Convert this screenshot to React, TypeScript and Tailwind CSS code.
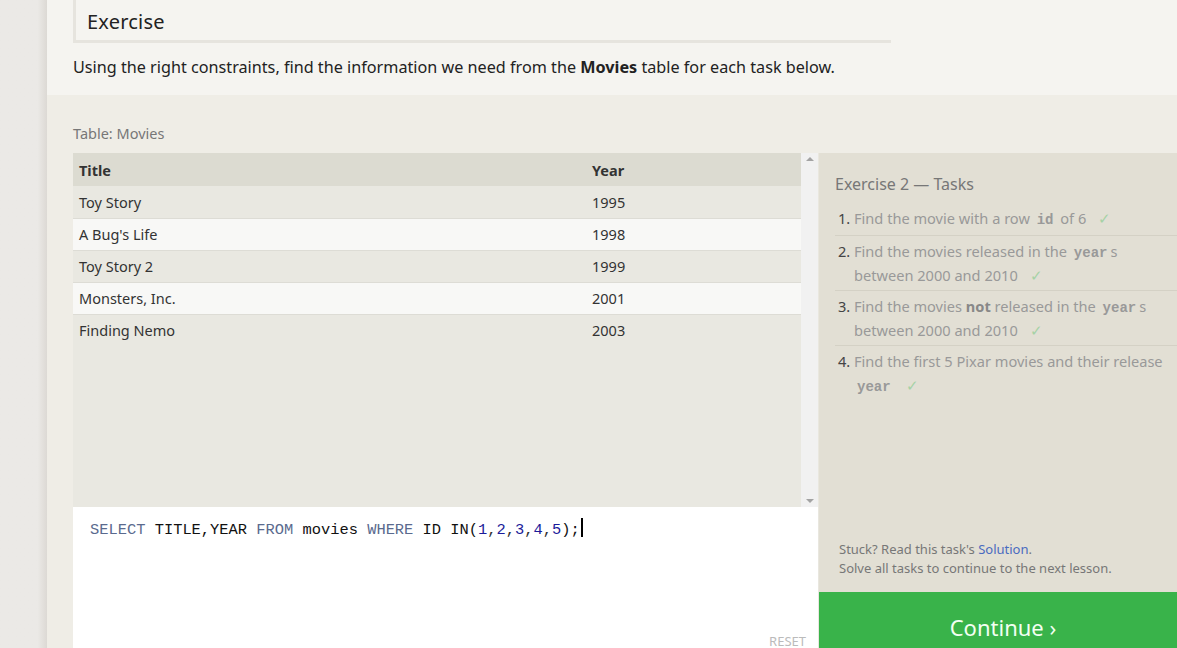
import React from 'react';

interface Movie {
  id: number;
  title: string;
  year: number;
}

const movies: Movie[] = [
  { id: 1, title: 'Toy Story', year: 1995 },
  { id: 2, title: "A Bug's Life", year: 1998 },
  { id: 3, title: 'Toy Story 2', year: 1999 },
  { id: 4, title: 'Monsters, Inc.', year: 2001 },
  { id: 5, title: 'Finding Nemo', year: 2003 }
];

const sans = { fontFamily: '"Noto Sans", "Open Sans", sans-serif' };
const mono = { fontFamily: '"Liberation Mono", monospace' };

function Code({ children }: { children: React.ReactNode }) {
  return (
    <code className="mx-[3px] text-[14px] font-bold leading-none text-[#999]" style={mono}>
      {children}
    </code>
  );
}

function Check() {
  return <span className="ml-[12px] text-[15px] leading-none text-[#a6d2a6]">✓</span>;
}

export default function App() {
  return (
    <div className="flex h-[648px] w-[1177px] overflow-hidden bg-[#ebe9e6] text-[#333]" style={sans}>
      {/* left gutter with shadow */}
      <div className="w-[47px] shrink-0 bg-gradient-to-r from-[#ebe9e6] from-80% to-[#dcd9d4]" />

      <div className="flex min-w-0 flex-1 flex-col">
        {/* intro */}
        <div className="h-[95px] shrink-0 bg-[#f5f4f0] pl-[26px]">
          <div className="w-[818px] border-b-[3px] border-l-[3px] border-[#e6e4de] pb-[4px] pl-[11px] pt-[8px]">
            <h2 className="text-[20px] leading-[28px] tracking-[0.2px] text-[#222]">Exercise</h2>
          </div>
          <p className="mt-[13px] text-[16.2px] leading-[22px] text-[#222]">
            Using the right constraints, find the information we need from the <b>Movies</b> table for each task below.
          </p>
        </div>

        {/* exercise body */}
        <div className="flex flex-1 flex-col bg-[#efede6] pl-[26px]">
          <div className="pb-[10px] pt-[28px] text-[14.5px] leading-[20px] text-[#777]">Table: Movies</div>

          <div className="flex flex-1">
            <div className="flex w-[745px] shrink-0 flex-col">
              {/* table + scrollbar */}
              <div className="flex h-[354px] shrink-0">
                <div className="flex-1 bg-[#e9e8e1]">
                  <table className="w-full border-collapse text-left text-[14.5px] text-[#333]">
                    <thead>
                      <tr className="h-[33px] bg-[#dcdbd1]">
                        <th className="w-[519px] pl-[6px] pt-[2px] font-bold">Title</th>
                        <th className="pt-[2px] font-bold">Year</th>
                      </tr>
                    </thead>
                    <tbody>
                      {movies.map((m, i) => (
                        <tr
                          key={m.id}
                          className={`h-[32px] ${i % 2 === 1 ? 'bg-[#f8f8f6]' : 'bg-[#e9e8e1]'} ${i === movies.length - 1 ? '' : 'border-b border-[#dddcd5]'}`}
                        >
                          <td className="pl-[6px] pt-[2px]">{m.title}</td>
                          <td className="pt-[2px]">{m.year}</td>
                        </tr>
                      ))}
                    </tbody>
                  </table>
                </div>
                <div className="flex w-[17px] flex-col items-center justify-between bg-[#f1f1f1] py-[4px]">
                  <span className="h-0 w-0 border-x-[4px] border-b-[4px] border-x-transparent border-b-[#a3a3a3]" />
                  <span className="h-0 w-0 border-x-[4px] border-t-[4px] border-x-transparent border-t-[#a3a3a3]" />
                </div>
              </div>

              {/* editor */}
              <div className="relative flex-1 bg-white pl-[17px] pt-[8px]">
                <div className="text-[15.4px] leading-[20px]" style={mono}>
                  <span className="text-[#5a6a8e]">SELECT</span>{' '}
                  <span className="text-[#111]">TITLE,YEAR</span>{' '}
                  <span className="text-[#5a6a8e]">FROM</span>{' '}
                  <span className="text-[#111]">movies</span>{' '}
                  <span className="text-[#5a6a8e]">WHERE</span>{' '}
                  <span className="text-[#111]">ID IN(</span>
                  <span className="text-[#1b1b9a]">1</span>,<span className="text-[#1b1b9a]">2</span>,
                  <span className="text-[#1b1b9a]">3</span>,<span className="text-[#1b1b9a]">4</span>,
                  <span className="text-[#1b1b9a]">5</span>
                  <span className="text-[#111]">);</span>
                  <span className="ml-[1px] inline-block h-[19px] w-[2px] translate-y-[3px] bg-black" />
                </div>
                <div className="absolute bottom-[-3px] right-[12px] text-[13px] uppercase text-[#bbb]">Reset</div>
              </div>
            </div>

            {/* tasks panel */}
            <div className="flex flex-1 flex-col border-l border-[#e9e7df]">
              <div className="flex flex-1 flex-col bg-[#e2dfd4] pl-[16px]">
                <div className="pt-[20px] text-[16px] leading-[22px] text-[#777]">Exercise 2 — Tasks</div>
                <ol className="mt-[11px] text-[14.6px] leading-[24px] text-[#999]">
                  <li className="flex pb-[5px]">
                    <span className="w-[19px] shrink-0 pl-[3px] text-[#444]">1.</span>
                    <span className="flex-1">
                      Find the movie with a row <Code>id</Code> of 6<Check />
                    </span>
                  </li>
                  <li className="flex border-t border-[#d4d1c5] pb-[3px] pt-[3px]">
                    <span className="w-[19px] shrink-0 pl-[3px] text-[#444]">2.</span>
                    <span className="flex-1">
                      Find the movies released in the <Code>year</Code>s between 2000 and 2010<Check />
                    </span>
                  </li>
                  <li className="flex border-t border-[#d4d1c5] pb-[3px] pt-[3px]">
                    <span className="w-[19px] shrink-0 pl-[3px] text-[#444]">3.</span>
                    <span className="flex-1">
                      Find the movies <b className="text-[#888]">not</b> released in the <Code>year</Code>s between 2000 and 2010
                      <Check />
                    </span>
                  </li>
                  <li className="flex border-t border-[#d4d1c5] pt-[3px]">
                    <span className="w-[19px] shrink-0 pl-[3px] text-[#444]">4.</span>
                    <span className="flex-1">
                      Find the first 5 Pixar movies and their release <Code>year</Code>
                      <Check />
                    </span>
                  </li>
                </ol>
                <div className="mt-auto pb-[14px] pl-[4px] text-[13px] leading-[19px] text-[#777]">
                  <div>
                    Stuck? Read this task's <span className="text-[#4a6bc0]">Solution</span>.
                  </div>
                  <div>Solve all tasks to continue to the next lesson.</div>
                </div>
              </div>
              <div className="flex h-[56px] shrink-0 items-center justify-center bg-[#39b34a] pl-[10px] pt-[14px] text-[22px] text-[#f2fff2]">
                Continue ›
              </div>
            </div>
          </div>
        </div>
      </div>
    </div>
  );
}
